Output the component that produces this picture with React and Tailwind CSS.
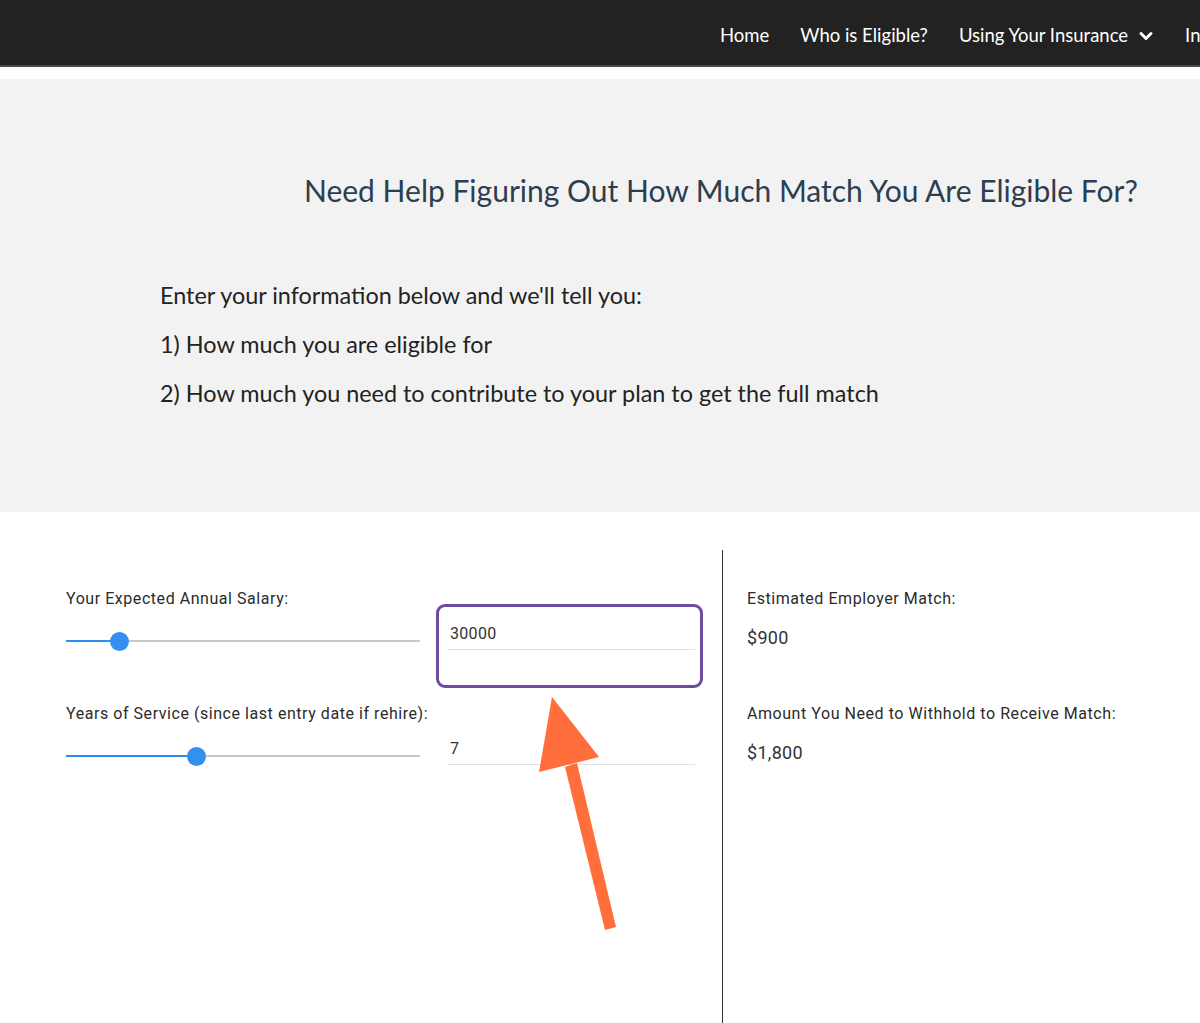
import React from "react";
import { FiChevronDown } from "react-icons/fi";

const lato = { fontFamily: "Lato, 'Noto Sans', sans-serif" };

const Slider = ({ fill }) => (
  <div className="relative h-5 w-[354px] flex items-center">
    <div className="h-[2px] bg-[#2f8ff0]" style={{ width: fill }}></div>
    <div className="h-[2px] flex-1 bg-[#c8c8c8]"></div>
    <div
      className="absolute top-[0.5px] w-[19px] h-[19px] rounded-full bg-[#3390ef]"
      style={{ left: fill - 9.5 }}
    ></div>
  </div>
);

const CalcRow = ({ label, fill, value, focused }) => (
  <div className="flex h-[115px] gap-4">
    <div className="flex flex-col w-[354px]">
      <label className="h-5 mt-px leading-5 text-[16px] text-[#2b2b2b] tracking-[0.55px] whitespace-nowrap">
        {label}
      </label>
      <div className="mt-[22px]">
        <Slider fill={fill} />
      </div>
    </div>
    <div
      className={`mt-4 w-[267px] h-[84px] rounded-[9px] border-[3px] pl-2 pr-[5px] pt-[14px] ${
        focused ? "border-[#6e4b9c]" : "border-transparent"
      }`}
    >
      <div className="h-[29px] border-b border-[#e2e2e2] pl-[3px] text-[16px] tracking-[0.3px] leading-[26px] text-[#333]">
        {value}
      </div>
    </div>
  </div>
);

const Result = ({ label, value }) => (
  <div className="flex flex-col h-[115px]">
    <label className="h-5 mt-px leading-5 text-[16px] text-[#2b2b2b] tracking-[0.55px] whitespace-nowrap">
      {label}
    </label>
    <div className="mt-[17px] text-[18px] tracking-[0.3px] leading-6 text-[#333]">
      {value}
    </div>
  </div>
);

export default function App() {
  return (
    <div className="relative w-[1200px] h-[1023px] overflow-hidden bg-white">
      {/* top nav */}
      <div
        className="h-[67px] bg-[#222222] border-b-2 border-[#4a4a4a] flex items-center pl-[720px] pt-[6px] gap-[31px] whitespace-nowrap text-white text-[18.5px]"
        style={lato}
      >
        <span>Home</span>
        <span>Who is Eligible?</span>
        <span className="flex items-center gap-2">
          Using Your Insurance
          <FiChevronDown className="w-5 h-5" strokeWidth={3.5} />
        </span>
        <span className="-ml-[2px]">Insurance</span>
      </div>

      <div className="h-3"></div>

      {/* intro panel */}
      <div className="bg-[#f2f2f2] h-[433px] pt-[93px]" style={lato}>
        <h2 className="pl-[304px] text-[30px] leading-9 text-[#2c3e50] whitespace-nowrap">
          Need Help Figuring Out How Much Match You Are Eligible For?
        </h2>
        <div className="mt-[63px] pl-[160px] text-[23.4px] leading-[49px] text-[#222]">
          <p>Enter your information below and we'll tell you:</p>
          <p>1) How much you are eligible for</p>
          <p>2) How much you need to contribute to your plan to get the full match</p>
        </div>
      </div>

      {/* calculator */}
      <div
        className="flex mt-[38px] h-[473px]"
        style={{ fontFamily: "Roboto, 'Noto Sans', sans-serif" }}
      >
        <div className="w-[722px] pl-[66px] pt-[38px]">
          <CalcRow
            label="Your Expected Annual Salary:"
            fill={53}
            value="30000"
            focused
          />
          <CalcRow
            label="Years of Service (since last entry date if rehire):"
            fill={130}
            value="7"
          />
        </div>
        <div className="flex-1 border-l border-[#333] pl-6 pt-[38px]">
          <Result label="Estimated Employer Match:" value="$900" />
          <Result
            label="Amount You Need to Withhold to Receive Match:"
            value="$1,800"
          />
        </div>
      </div>

      {/* annotation arrow */}
      <svg
        className="absolute left-[530px] top-[690px]"
        width="100"
        height="250"
        viewBox="0 0 100 250"
      >
        <polygon points="22,7 9,82 69,67" fill="#ff6e3b" />
        <polygon points="35,77 47,73 86,237 75,240" fill="#ff6e3b" />
      </svg>
    </div>
  );
}
